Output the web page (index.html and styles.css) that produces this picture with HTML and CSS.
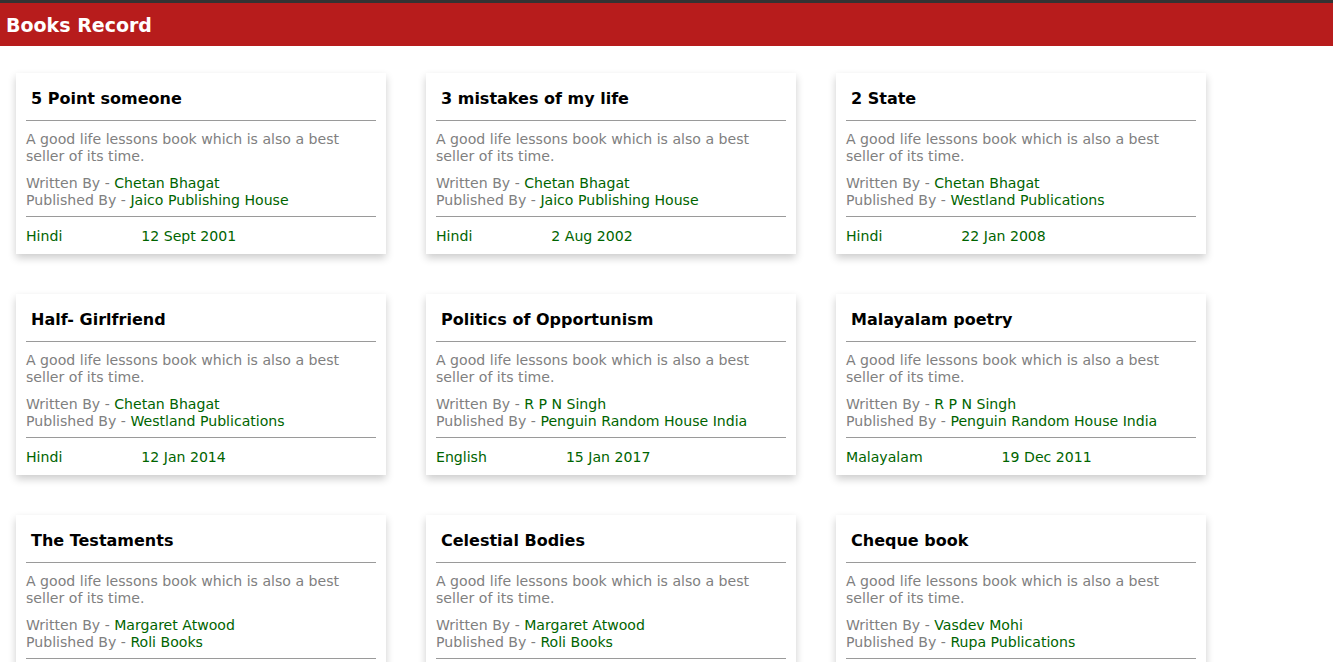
FILE: index.html
```html
<!DOCTYPE html>
<html>
<head>
<meta charset="utf-8">
<title>Books Record</title>
<link rel="stylesheet" href="styles.css">
</head>
<body>
<header class="topbar"><h1 class="brand">Books Record</h1></header>
<main class="grid">
  <article class="card">
    <h3 class="title">5 Point someone</h3>
    <div class="rule"></div>
    <p class="desc">A good life lessons book which is also a best seller of its time.</p>
    <p class="meta">Written By - <span class="val">Chetan Bhagat</span><br>Published By - <span class="val">Jaico Publishing House</span></p>
    <div class="rule rule2"></div>
    <div class="foot"><span class="lang">Hindi</span><span class="val">12 Sept 2001</span></div>
  </article>
  <article class="card">
    <h3 class="title">3 mistakes of my life</h3>
    <div class="rule"></div>
    <p class="desc">A good life lessons book which is also a best seller of its time.</p>
    <p class="meta">Written By - <span class="val">Chetan Bhagat</span><br>Published By - <span class="val">Jaico Publishing House</span></p>
    <div class="rule rule2"></div>
    <div class="foot"><span class="lang">Hindi</span><span class="val">2 Aug 2002</span></div>
  </article>
  <article class="card">
    <h3 class="title">2 State</h3>
    <div class="rule"></div>
    <p class="desc">A good life lessons book which is also a best seller of its time.</p>
    <p class="meta">Written By - <span class="val">Chetan Bhagat</span><br>Published By - <span class="val">Westland Publications</span></p>
    <div class="rule rule2"></div>
    <div class="foot"><span class="lang">Hindi</span><span class="val">22 Jan 2008</span></div>
  </article>
  <article class="card">
    <h3 class="title">Half- Girlfriend</h3>
    <div class="rule"></div>
    <p class="desc">A good life lessons book which is also a best seller of its time.</p>
    <p class="meta">Written By - <span class="val">Chetan Bhagat</span><br>Published By - <span class="val">Westland Publications</span></p>
    <div class="rule rule2"></div>
    <div class="foot"><span class="lang">Hindi</span><span class="val">12 Jan 2014</span></div>
  </article>
  <article class="card">
    <h3 class="title">Politics of Opportunism</h3>
    <div class="rule"></div>
    <p class="desc">A good life lessons book which is also a best seller of its time.</p>
    <p class="meta">Written By - <span class="val">R P N Singh</span><br>Published By - <span class="val">Penguin Random House India</span></p>
    <div class="rule rule2"></div>
    <div class="foot"><span class="lang">English</span><span class="val">15 Jan 2017</span></div>
  </article>
  <article class="card">
    <h3 class="title">Malayalam poetry</h3>
    <div class="rule"></div>
    <p class="desc">A good life lessons book which is also a best seller of its time.</p>
    <p class="meta">Written By - <span class="val">R P N Singh</span><br>Published By - <span class="val">Penguin Random House India</span></p>
    <div class="rule rule2"></div>
    <div class="foot"><span class="lang">Malayalam</span><span class="val">19 Dec 2011</span></div>
  </article>
  <article class="card">
    <h3 class="title">The Testaments</h3>
    <div class="rule"></div>
    <p class="desc">A good life lessons book which is also a best seller of its time.</p>
    <p class="meta">Written By - <span class="val">Margaret Atwood</span><br>Published By - <span class="val">Roli Books</span></p>
    <div class="rule rule2"></div>
    <div class="foot"><span class="lang">English</span><span class="val">8 Oct 2019</span></div>
  </article>
  <article class="card">
    <h3 class="title">Celestial Bodies</h3>
    <div class="rule"></div>
    <p class="desc">A good life lessons book which is also a best seller of its time.</p>
    <p class="meta">Written By - <span class="val">Margaret Atwood</span><br>Published By - <span class="val">Roli Books</span></p>
    <div class="rule rule2"></div>
    <div class="foot"><span class="lang">English</span><span class="val">10 Sept 2019</span></div>
  </article>
  <article class="card">
    <h3 class="title">Cheque book</h3>
    <div class="rule"></div>
    <p class="desc">A good life lessons book which is also a best seller of its time.</p>
    <p class="meta">Written By - <span class="val">Vasdev Mohi</span><br>Published By - <span class="val">Rupa Publications</span></p>
    <div class="rule rule2"></div>
    <div class="foot"><span class="lang">Sindhi</span><span class="val">5 Mar 2019</span></div>
  </article>
</main>
</body>
</html>
```
FILE: styles.css
```css
html, body {
  margin: 0;
  padding: 0;
  background: #ffffff;
  font-family: "DejaVu Sans", Verdana, sans-serif;
}

.topbar {
  border-top: 3px solid #333333;
  background: #b71c1c;
  height: 43px;
  display: flex;
  align-items: center;
  padding-left: 6px;
}

.brand {
  margin: 0;
  color: #ffffff;
  font-size: 19px;
  font-weight: bold;
}

.grid {
  display: grid;
  grid-template-columns: repeat(3, 370px);
  column-gap: 40px;
  row-gap: 40px;
  padding: 27px 16px;
}

.card {
  background: #ffffff;
  box-shadow: 0 4px 8px 0 rgba(0, 0, 0, 0.2);
  padding: 16px 10px 9px 10px;
  font-size: 14.1px;
  line-height: 17px;
  color: #808080;
}

.title {
  margin: 0;
  padding-left: 5px;
  font-size: 16px;
  line-height: 20px;
  font-weight: bold;
  color: #000000;
}

.rule {
  height: 1px;
  background: #9a9a9a;
  margin-top: 11px;
}

.rule2 {
  margin-top: 7px;
}

.desc {
  margin: 10px 0 0 0;
}

.meta {
  margin: 10px 0 0 0;
}

.val {
  color: #006400;
}

.foot {
  margin-top: 11px;
  display: flex;
  color: #006400;
}

.lang {
  margin-right: 79px;
}
```
